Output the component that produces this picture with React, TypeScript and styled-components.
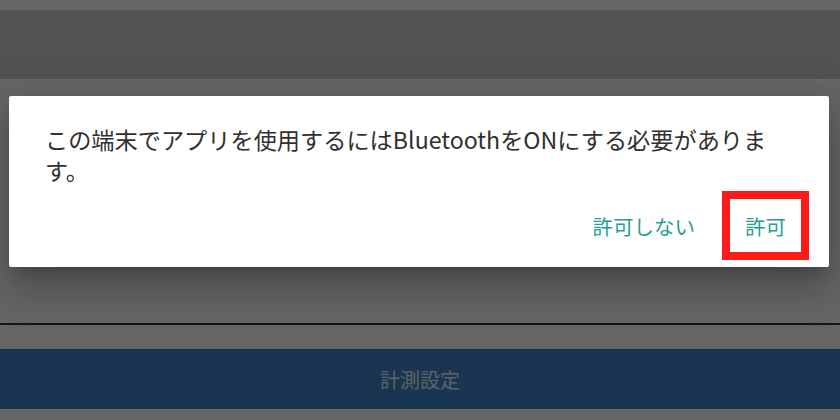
import React from 'react';
import styled, { createGlobalStyle } from 'styled-components';

const GlobalStyle = createGlobalStyle`
  html, body {
    margin: 0;
    padding: 0;
    width: 840px;
    height: 420px;
    overflow: hidden;
    font-family: 'Noto Sans CJK JP', 'Noto Sans', sans-serif;
  }
`;

const Page = styled.div`
  position: relative;
  width: 840px;
  height: 420px;
  display: flex;
  flex-direction: column;
  background: #ffffff;
`;

const StatusGap = styled.div`
  height: 10px;
`;

const Header = styled.div`
  height: 69px;
  background: #cdcdcd;
`;

const Content = styled.div`
  flex: 1;
`;

const Divider = styled.div`
  height: 2px;
  background: #3a3a3a;
`;

const Spacer = styled.div`
  height: 24px;
`;

const BottomButton = styled.div`
  height: 60px;
  margin-bottom: 11px;
  display: flex;
  align-items: center;
  justify-content: center;
  background: #4285cd;
  color: #e8f4ff;
  font-size: 20px;
`;

const Scrim = styled.div`
  position: absolute;
  inset: 0;
  background: rgba(0, 0, 0, 0.6);
  display: flex;
  align-items: flex-start;
  padding: 96px 0 0 9px;
  box-sizing: border-box;
`;

const Dialog = styled.div`
  width: 820px;
  height: 171px;
  box-sizing: border-box;
  background: #ffffff;
  border-radius: 2px;
  box-shadow: 0 11px 15px -7px rgba(0, 0, 0, 0.2), 0 24px 38px 3px rgba(0, 0, 0, 0.14),
    0 9px 46px 8px rgba(0, 0, 0, 0.12);
  padding: 28px 28px 15px 36px;
  display: flex;
  flex-direction: column;
`;

const Message = styled.p`
  margin: 0;
  padding-right: 10px;
  font-size: 23.2px;
  line-height: 31px;
  color: #303030;
`;

const Actions = styled.div`
  margin-top: auto;
  display: flex;
  justify-content: flex-end;
  gap: 20px;
`;

const ActionButton = styled.button<{ $marked?: boolean }>`
  height: 53px;
  padding: 0 15px;
  border: none;
  background: transparent;
  font-family: inherit;
  font-size: 20.5px;
  color: #22a092;
  outline: ${(p) => (p.$marked ? '8px solid #ff1a1a' : 'none')};
  cursor: pointer;
`;

export default function App() {
  return (
    <>
      <GlobalStyle />
      <Page>
        <StatusGap />
        <Header />
        <Content />
        <Divider />
        <Spacer />
        <BottomButton>計測設定</BottomButton>
        <Scrim>
          <Dialog>
            <Message>この端末でアプリを使用するにはBluetoothをONにする必要があります。</Message>
            <Actions>
              <ActionButton>許可しない</ActionButton>
              <ActionButton $marked>許可</ActionButton>
            </Actions>
          </Dialog>
        </Scrim>
      </Page>
    </>
  );
}
